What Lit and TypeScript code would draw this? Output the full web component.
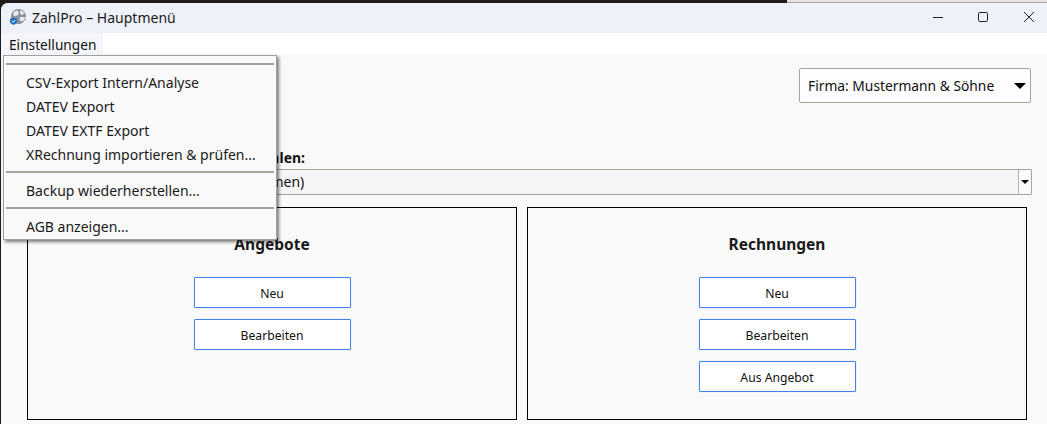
import { LitElement, html, css, svg } from 'lit';
import { customElement } from 'lit/decorators.js';

const MENU_GROUPS = [
  ['CSV-Export Intern/Analyse', 'DATEV Export', 'DATEV EXTF Export', 'XRechnung importieren & prüfen...'],
  ['Backup wiederherstellen...'],
  ['AGB anzeigen...'],
];

/** Small globe with shield, as in the window title */
const appIcon = svg`
  <svg class="app-icon" width="16" height="16" viewBox="0 0 16 16">
    <circle cx="8.5" cy="7.5" r="7.5" fill="#8b9097" />
    <path d="M4 2.5 L8 1.5 L9 5 L5.5 7.5 L3 6 Z M10.5 1 L14.5 4 L12 6.5 L10 4 Z M10 8 L15.5 8 L13 12.5 L9.5 11.5 Z" fill="#e6e8ec" />
    <path d="M0 10 L3.5 8.5 L7 10 V12.5 C7 14.2 5.5 15.2 3.5 16 C1.5 15.2 0 14.2 0 12.5 Z" fill="#1f6fc4" />
    <path d="M2 12 L3.2 13.2 L5.2 11" fill="none" stroke="#fff" stroke-width="1" />
  </svg>
`;

@customElement('app-root')
export class AppRoot extends LitElement {
  static override styles = css`
    :host {
      display: block;
      position: relative;
      width: 1047px;
      height: 424px;
      overflow: hidden;
      background: #1c1c1c;
      font-family: 'Noto Sans', sans-serif;
      font-size: 14px;
      color: #111;
    }

    .strip {
      height: 3px;
      display: flex;
      justify-content: flex-end;
    }

    .strip-light {
      width: 260px;
      box-sizing: border-box;
      background: #e4e4e4;
      border-bottom: 1px solid #a9a9a9;
    }

    .window {
      margin-left: 1px;
      height: 421px;
      display: flex;
      flex-direction: column;
      background: #f9f9f9;
      border-top-left-radius: 7px;
      overflow: hidden;
    }

    .titlebar {
      height: 30px;
      box-sizing: border-box;
      flex: none;
      display: flex;
      align-items: center;
      background: #eff1f8;
      padding: 0 0 2px 9px;
    }

    .app-icon {
      margin-right: 6px;
    }

    .title {
      flex: 1;
      font-size: 14px;
      color: #1a1a1a;
    }

    .controls {
      display: flex;
      align-items: center;
      gap: 35px;
      padding-right: 13px;
    }

    .controls svg {
      display: block;
    }

    .controls svg.maximize {
      margin-right: 1px;
    }

    .menubar {
      height: 21px;
      flex: none;
      background: #fff;
      display: flex;
    }

    .menu-title {
      padding-left: 8px;
      width: 94px;
      background: #f5f6fb;
      line-height: 23px;
      font-size: 13.7px;
    }

    .content {
      flex: 1;
      padding: 14px 16px 4px 26px;
      display: flex;
      flex-direction: column;
      min-height: 0;
    }

    .top-row {
      display: flex;
      justify-content: flex-end;
    }

    .combo {
      width: 232px;
      height: 35px;
      box-sizing: border-box;
      display: flex;
      align-items: center;
      justify-content: space-between;
      padding: 0 4px 0 8px;
      background: #fdfdfd;
      border: 1px solid #a8a39c;
      border-radius: 2px;
      font-size: 13.8px;
    }

    .arrow {
      width: 0;
      height: 0;
      border-left: 6px solid transparent;
      border-right: 6px solid transparent;
      border-top: 6px solid #000;
    }

    .label {
      margin-top: 43px;
      height: 23px;
      padding-left: 2px;
      line-height: 23px;
      font-weight: 700;
      font-size: 14px;
      white-space: nowrap;
    }

    .select {
      height: 26px;
      box-sizing: border-box;
      display: flex;
      background: #f5f5f5;
      border: 1px solid #a8a39c;
      border-radius: 1px;
      margin-right: -1px;
    }

    .select-text {
      flex: 1;
      line-height: 24px;
      padding-left: 6px;
      white-space: nowrap;
      font-size: 14px;
    }

    .select-btn {
      width: 12px;
      border-left: 1px solid #b5b1ab;
      background: #fafafa;
      display: flex;
      align-items: center;
      justify-content: center;
    }

    .select-btn .arrow {
      border-left-width: 4px;
      border-right-width: 4px;
      border-top-width: 4px;
    }

    .panels {
      margin-top: 12px;
      display: flex;
      gap: 10px;
      flex: 1;
      min-height: 0;
    }

    .panel {
      box-sizing: border-box;
      height: 213px;
      border: 1px solid #000;
      display: flex;
      flex-direction: column;
      align-items: center;
      padding-top: 25px;
      background: #fafafa;
    }

    .panel.offers {
      width: 490px;
    }

    .panel.invoices {
      width: 500px;
    }

    .panel h2 {
      margin: 0 0 22px;
      font-size: 15.5px;
      line-height: 22px;
      font-weight: 700;
      color: #1a1a1a;
    }

    .buttons {
      display: flex;
      flex-direction: column;
      gap: 11px;
    }

    .buttons button {
      width: 157px;
      height: 31px;
      box-sizing: border-box;
      padding: 1px 0 0;
      background: #fff;
      border: 1px solid #3f82ee;
      border-radius: 1px;
      box-shadow: 0 0 0 1px #f3f3f3;
      font: inherit;
      font-size: 12.2px;
      color: #111;
    }

    .menu {
      position: absolute;
      left: 3px;
      top: 55px;
      width: 274px;
      height: 185px;
      box-sizing: border-box;
      padding: 7px 2px 0;
      background: #f9f9f9;
      border: 1px solid #a0a0a0;
      box-shadow: 2px 2px 3px rgba(0, 0, 0, 0.5);
    }

    .menu hr {
      margin: 0;
      height: 2px;
      border: none;
      background: #a5a29e;
    }

    .group {
      padding: 6px 0 4px;
    }

    .item {
      height: 24px;
      line-height: 24px;
      padding-left: 20px;
      font-size: 14px;
      white-space: nowrap;
      color: #1a1a1a;
    }
  `;

  override render() {
    return html`
      <div class="strip"><div class="strip-light"></div></div>
      <div class="window">
        <div class="titlebar">
          ${appIcon}
          <span class="title">ZahlPro – Hauptmenü</span>
          <div class="controls">
            <svg width="10" height="10" viewBox="0 0 10 10">
              <path d="M0 5.5 H10" stroke="#222" stroke-width="1" />
            </svg>
            <svg class="maximize" width="10" height="10" viewBox="0 0 10 10">
              <rect x="0.5" y="0.5" width="9" height="9" rx="1.2" fill="none" stroke="#222" stroke-width="1" />
            </svg>
            <svg width="10" height="10" viewBox="0 0 10 10">
              <path d="M0 0 L10 10 M10 0 L0 10" stroke="#222" stroke-width="1" />
            </svg>
          </div>
        </div>
        <div class="menubar"><div class="menu-title">Einstellungen</div></div>
        <div class="content">
          <div class="top-row">
            <div class="combo"><span>Firma: Mustermann &amp; Söhne</span><span class="arrow"></span></div>
          </div>
          <div class="label">Kunden für Angebot/Rechnung wählen:</div>
          <div class="select">
            <span class="select-text">(Bitte Kunden aus der Liste übernehmen)</span>
            <span class="select-btn"><span class="arrow"></span></span>
          </div>
          <div class="panels">
            <section class="panel offers">
              <h2>Angebote</h2>
              <div class="buttons">
                <button>Neu</button>
                <button>Bearbeiten</button>
              </div>
            </section>
            <section class="panel invoices">
              <h2>Rechnungen</h2>
              <div class="buttons">
                <button>Neu</button>
                <button>Bearbeiten</button>
                <button>Aus Angebot</button>
              </div>
            </section>
          </div>
        </div>
      </div>
      <div class="menu">
        ${MENU_GROUPS.map(
          (group) => html`
            <hr />
            <div class="group">${group.map((item) => html`<div class="item">${item}</div>`)}</div>
          `,
        )}
      </div>
    `;
  }
}
